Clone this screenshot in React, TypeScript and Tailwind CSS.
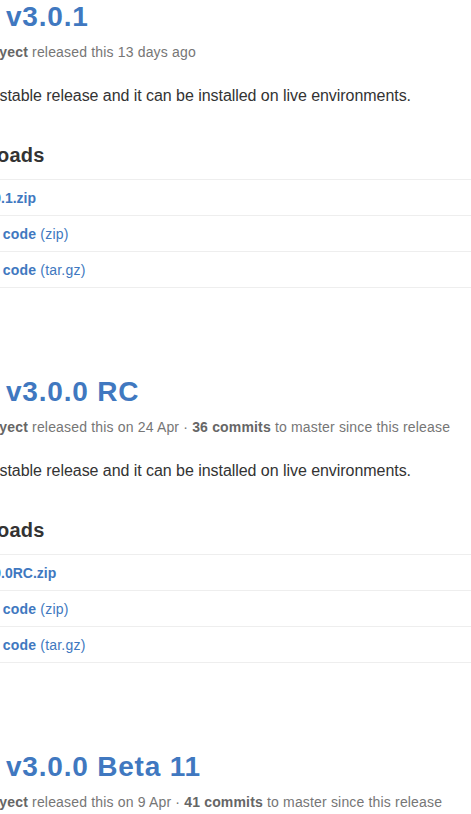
import React from "react";

type Release = {
  title: string;
  when: string;
  commits?: string;
  file: string;
};

const releases: Release[] = [
  { title: "v3.0.1", when: "13 days ago", file: "app-3.0.1.zip" },
  { title: "v3.0.0 RC", when: "on 24 Apr", commits: "36 commits", file: "app-3.0.0RC.zip" },
  { title: "v3.0.0 Beta 11", when: "on 9 Apr", commits: "41 commits", file: "app-3.0.0Beta11.zip" },
];

function ReleaseBlock({ r }: { r: Release }) {
  return (
    <div className="h-[375px] shrink-0">
      <h1 className="pl-[70px] text-[28px] leading-[36px] font-bold text-[#4078c0] -mt-px tracking-[0.8px]">
        {r.title}
      </h1>
      <div className="mt-[7px] -ml-[2px] text-[14px] leading-[20px] text-[#767676] whitespace-nowrap tracking-[0.17px]">
        <span className="font-bold text-[#666]">nulledproyect</span> released this {r.when}
        {r.commits && (
          <>
            {" · "}
            <span className="font-bold text-[#666]">{r.commits}</span> to master since this release
          </>
        )}
      </div>
      <p className="mt-[22px] text-[16px] leading-[24px] text-[#333] whitespace-nowrap tracking-[-0.05px]">
        This is a stable release and it can be installed on live environments.
      </p>
      <h2 className="mt-[32px] text-[20px] leading-[30px] font-bold text-[#333] tracking-[0.2px]">Downloads</h2>
      <ul className="mt-[9px] border-b border-[#eee]">
        <li className="h-[36px] border-t border-[#eee] flex items-center pl-[16px] text-[14px] leading-[20px] font-bold text-[#4078c0] whitespace-nowrap">
          {r.file}
        </li>
        <li className="h-[36px] border-t border-[#eee] flex items-center pl-[14px] text-[14px] leading-[20px] text-[#4078c0] whitespace-nowrap tracking-[0.2px]">
          <span className="font-bold">Source code</span>&nbsp;(zip)
        </li>
        <li className="h-[36px] border-t border-[#eee] flex items-center pl-[14px] text-[14px] leading-[20px] text-[#4078c0] whitespace-nowrap tracking-[0.2px]">
          <span className="font-bold">Source code</span>&nbsp;(tar.gz)
        </li>
      </ul>
    </div>
  );
}

export default function App() {
  return (
    <div
      className="w-[471px] h-[814px] overflow-hidden bg-white"
      style={{ fontFamily: '"Liberation Sans", Arial, Helvetica, sans-serif' }}
    >
      <div className="-ml-[64px] w-[600px] flex flex-col">
        {releases.map((r) => (
          <ReleaseBlock key={r.title} r={r} />
        ))}
      </div>
    </div>
  );
}
